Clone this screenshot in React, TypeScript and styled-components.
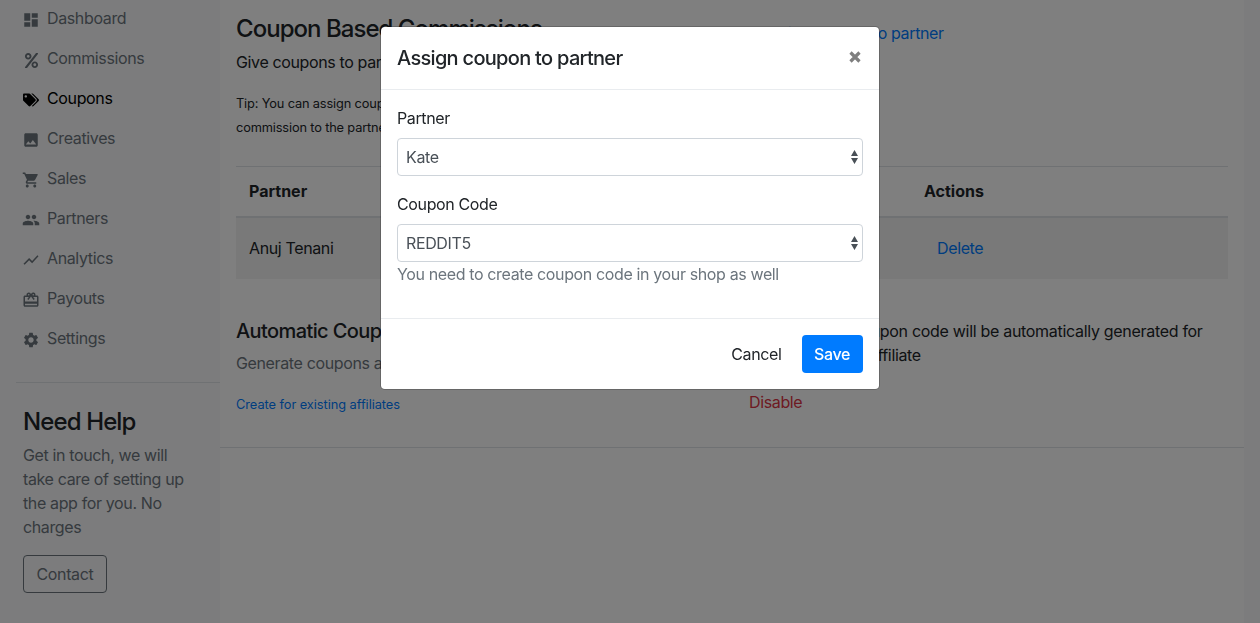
import React from "react";
import styled, { createGlobalStyle } from "styled-components";
import { FaPercent, FaTags } from "react-icons/fa";
import { MdDashboard, MdPhoto, MdShoppingCart, MdPeople, MdShowChart, MdCardGiftcard, MdSettings } from "react-icons/md";

const Global = createGlobalStyle`
  html, body { margin: 0; padding: 0; height: 100%; overflow: hidden; background: #fff; }
  * { box-sizing: border-box; letter-spacing: -0.023em; }
  body { font-family: Inter, "Liberation Sans", sans-serif; font-size: 16px; line-height: 24px; color: #212529; }
`;

const Page = styled.div`
  display: grid;
  grid-template-columns: 220px 1fr 16px;
  height: 623px;
  overflow: hidden;
`;
const Sidebar = styled.aside`
  background: #f8f9fa;
  height: 623px;
  padding: 0 0 0 16px;
  overflow: hidden;
`;
const Gutter = styled.div`
  background: #f8f9fa;
`;
const Nav = styled.nav`
  display: flex;
  flex-direction: column;
  margin-top: -2px;
  padding-bottom: 24px;
  border-bottom: 1px solid #dee2e6;
`;
const NavItem = styled.a<{ $active?: boolean }>`
  display: flex;
  align-items: center;
  height: 40px;
  padding-left: 6px;
  gap: 7px;
  color: ${(p) => (p.$active ? "#000" : "#6c757d")};
`;
const NavIcon = styled.span`
  display: flex;
  align-items: center;
  justify-content: center;
  width: 18px;
  height: 18px;
  flex: none;
  margin-top: 4px;
`;
const Help = styled.div`
  padding: 24px 30px 0 7px;
`;
const HelpTitle = styled.h4`
  margin: 0 0 7px;
  font-size: 24px;
  line-height: 29px;
  font-weight: 500;
  letter-spacing: -0.037em;
  color: #212529;
`;
const HelpText = styled.p`
  margin: 0 0 16px;
  color: #6c757d;
`;
const OutlineButton = styled.a`
  display: inline-block;
  padding: 6px 12.5px;
  border: 1px solid #6c757d;
  border-radius: 4px;
  color: #6c757d;
`;

const Main = styled.main`
  min-width: 0;
`;
const Section = styled.div`
  padding: 0 16px;
  border-bottom: 1px solid #dee2e6;
`;
const Row = styled.div`
  display: grid;
  grid-template-columns: 513px 1fr;
`;
const Heading = styled.h5`
  margin: 0 0 8px;
  font-size: 20px;
  line-height: 24px;
  font-weight: 500;
  letter-spacing: -0.03em;
`;
const TopHeading = styled.h4`
  margin: 14px 0 7px;
  font-size: 24px;
  line-height: 29px;
  font-weight: 500;
  letter-spacing: -0.04em;
`;
const Lead = styled.p`
  margin: 0;
  color: #212529;
`;
const WideLead = styled(Lead)`
  letter-spacing: -0.019em;
`;
const LastLine = styled.span`
  word-spacing: 1.4px;
`;
const Muted = styled(Lead)`
  color: #6c757d;
`;
const Tip = styled.p`
  margin: 18px 0 0;
  font-size: 12.8px;
  line-height: 24px;
  letter-spacing: -0.012em;
`;
const Link = styled.a`
  color: #007bff;
`;
const TopLink = styled(Link)`
  display: block;
  margin: 21px 0 0 12px;
`;
const RowLink = styled(Link)`
  margin-left: 13px;
`;
const SmallLink = styled(Link)`
  display: block;
  font-size: 12.8px;
  line-height: 18px;
  margin-top: 21px;
  letter-spacing: -0.004em;
`;
const Danger = styled.a`
  display: block;
  color: #dc3545;
  margin-top: 23px;
`;
const Table = styled.table`
  width: 100%;
  border-collapse: collapse;
  margin-top: 26px;
  th, td { padding: 12px 13px; text-align: left; border-top: 1px solid #dee2e6; }
  th { font-weight: 700; border-bottom: 2px solid #dee2e6; height: 50px; letter-spacing: 0; }
  td { height: 62px; background: rgba(0,0,0,.05); }
  th:first-child { width: 675px; }
`;
const Auto = styled.div`
  margin-top: 40px;
  padding-bottom: 33px;
`;

const Backdrop = styled.div`
  position: fixed;
  inset: 0;
  background: rgba(0,0,0,.5);
`;
const Modal = styled.div`
  position: fixed;
  top: 26px;
  left: 380px;
  width: 500px;
  background: #fff;
  border: 1px solid rgba(0,0,0,.2);
  border-radius: 4.8px;
  background-clip: padding-box;
`;
const ModalHeader = styled.div`
  display: flex;
  align-items: flex-start;
  justify-content: space-between;
  padding: 16px;
  border-bottom: 1px solid #e9ecef;
`;
const ModalTitle = styled.h5`
  margin: 0;
  font-size: 20px;
  line-height: 30px;
  font-weight: 500;
  letter-spacing: -0.035em;
  color: #212529;
`;
const Close = styled.span`
  display: block;
  svg { display: block; width: 14px; height: 14px; margin: 7px 1px 0 0; }
`;
const ModalBody = styled.div`
  padding: 16px;
`;
const Group = styled.div`
  margin-bottom: 16px;
`;
const Label = styled.label`
  display: block;
  margin-bottom: 8px;
`;
const Select = styled.div`
  display: flex;
  align-items: center;
  justify-content: space-between;
  height: 38px;
  padding: 0 3px 0 8px;
  border: 1px solid #ced4da;
  border-radius: 4px;
  color: #495057;
  svg { width: 9px; height: 16px; fill: #495057; }
`;
const HelpBlock = styled.small`
  display: block;
  font-size: 16px;
  color: #6c757d;
`;
const ModalFooter = styled.div`
  display: flex;
  justify-content: flex-end;
  align-items: center;
  gap: 8px;
  padding: 16px;
  border-top: 1px solid #e9ecef;
`;
const Ghost = styled.a`
  padding: 7px 12px;
  color: #212529;
`;
const Primary = styled.a`
  padding: 7px 13px 7px 12.5px;
  background: #007bff;
  color: #fff;
  font-weight: 500;
  border-radius: 4px;
`;

const Arrows = () => (
  <svg viewBox="0 0 9 16"><path d="M4.500 1 8 7H1zM1 9h7l-3.500 6z" /></svg>
);

const items: [string, React.ReactNode, boolean?][] = [
  ["Dashboard", <MdDashboard size={18} />],
  ["Commissions", <FaPercent size={15} />],
  ["Coupons", <FaTags size={16} />, true],
  ["Creatives", <MdPhoto size={18} />],
  ["Sales", <MdShoppingCart size={18} />],
  ["Partners", <MdPeople size={18} />],
  ["Analytics", <MdShowChart size={18} />],
  ["Payouts", <MdCardGiftcard size={18} />],
  ["Settings", <MdSettings size={18} />],
];

export default function App() {
  return (
    <>
      <Global />
      <Page>
        <Sidebar>
          <Nav>
            {items.map(([label, icon, active]) => (
              <NavItem key={label} $active={active}>
                <NavIcon>{icon}</NavIcon>
                {label}
              </NavItem>
            ))}
          </Nav>
          <Help>
            <HelpTitle>Need Help</HelpTitle>
            <HelpText>Get in touch, we will take care of setting up the app for you. No charges</HelpText>
            <OutlineButton>Contact</OutlineButton>
          </Help>
        </Sidebar>
        <Main>
          <Section>
            <Row>
              <div>
                <TopHeading>Coupon Based Commissions</TopHeading>
                <Lead>Give coupons to partners</Lead>
                <Tip>
                  Tip: You can assign coupon to a partner and give
                  <br />
                  commission to the partner
                </Tip>
              </div>
              <TopLink>Assign coupon to partner</TopLink>
            </Row>
            <Table>
              <thead>
                <tr>
                  <th>Partner</th>
                  <th>Actions</th>
                </tr>
              </thead>
              <tbody>
                <tr>
                  <td>Anuj Tenani</td>
                  <td><RowLink>Delete</RowLink></td>
                </tr>
              </tbody>
            </Table>
            <Auto>
              <Row>
                <div>
                  <Heading>Automatic Coupons</Heading>
                  <Muted>Generate coupons automatically</Muted>
                  <SmallLink>Create for existing affiliates</SmallLink>
                </div>
                <div>
                  <WideLead>
                    A new unique coupon code will be automatically generated for
                    <br />
                    <LastLine>each and every affiliate</LastLine>
                  </WideLead>
                  <Danger>Disable</Danger>
                </div>
              </Row>
            </Auto>
          </Section>
        </Main>
        <Gutter />
      </Page>
      <Backdrop />
      <Modal>
        <ModalHeader>
          <ModalTitle>Assign coupon to partner</ModalTitle>
          <Close>
            <svg viewBox="0 0 14 14"><path d="M2.500 2.500l9 9M11.500 2.500l-9 9" stroke="#7f7f7f" strokeWidth="3.200" /></svg>
          </Close>
        </ModalHeader>
        <ModalBody>
          <Group>
            <Label>Partner</Label>
            <Select>Kate<Arrows /></Select>
          </Group>
          <Group>
            <Label>Coupon Code</Label>
            <Select>REDDIT5<Arrows /></Select>
            <HelpBlock>You need to create coupon code in your shop as well</HelpBlock>
          </Group>
        </ModalBody>
        <ModalFooter>
          <Ghost>Cancel</Ghost>
          <Primary>Save</Primary>
        </ModalFooter>
      </Modal>
    </>
  );
}
